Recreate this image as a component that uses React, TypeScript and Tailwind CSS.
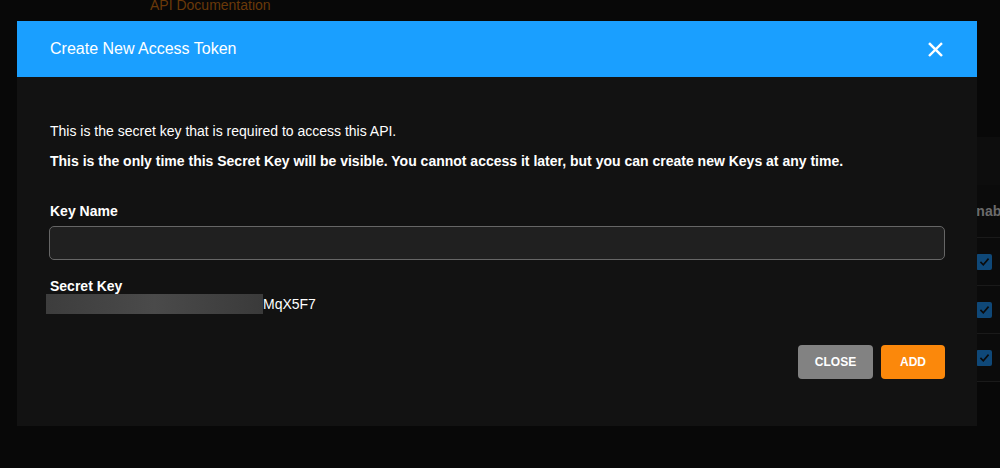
const ROWS = [0, 1, 2];

function CloseIcon() {
  return (
    <svg viewBox="0 0 16 16" className="size-[15px]" fill="none" stroke="white" strokeWidth={2.6} strokeLinecap="square">
      <path d="M2 2L14 14M14 2L2 14" />
    </svg>
  );
}

function BackgroundPage() {
  return (
    <div className="relative h-[468px] w-[1000px] overflow-hidden bg-[#080808]">
      <div className="-mt-[3px] pl-[150px] text-[14px] leading-[16px] text-[#6a3908]">API Documentation</div>
      <div className="ml-[600px] mt-[124px] w-[420px] bg-[#0b0b0b]">
        <div className="h-[48px] bg-[#0d0d0d]" />
        <div className="flex h-[53px] items-center border-b border-[#1a1a1a] pl-[367px] text-[14px] font-bold text-[#6b6b6b]">
          Enabled
        </div>
        {ROWS.map((r) => (
          <div key={r} className="flex h-[48px] items-center border-b border-[#1a1a1a] pl-[376px]">
            <div className="flex size-[16px] items-center justify-center rounded-[2px] bg-[#0f4878]">
              <svg viewBox="0 0 16 16" className="size-[13px]" fill="none" stroke="#0b0b0b" strokeWidth={2}>
                <path d="M3 8.5L6.5 12L13 4.5" />
              </svg>
            </div>
          </div>
        ))}
      </div>
    </div>
  );
}

export default function App() {
  return (
    <div className="relative h-[468px] w-[1000px] font-['Liberation_Sans',Arial,sans-serif]">
      <BackgroundPage />
      <div className="absolute inset-0">
        <div className="ml-[17px] mt-[21px] w-[960px] bg-[#121212]">
          <div className="flex h-[56px] items-center justify-between bg-[#1a9fff] pl-[33px] pr-[32px]">
            <h2 className="text-[16px] text-white">Create New Access Token</h2>
            <button className="flex size-[20px] items-center justify-center">
              <CloseIcon />
            </button>
          </div>
          <div className="px-8 pb-[47px] pt-[46px] text-white">
            <p className="pl-px text-[14px] leading-[16px]">This is the secret key that is required to access this API.</p>
            <p className="mt-[14px] pl-px text-[14px] font-bold leading-[16px]">
              This is the only time this Secret Key will be visible. You cannot access it later, but you can create new Keys at any time.
            </p>
            <label className="mt-[34px] block pl-px text-[14px] font-bold leading-[16px]">Key Name</label>
            <input
              type="text"
              className="mt-[7px] block h-[34px] w-full rounded-[5px] border border-[#666] bg-[#202020] px-3 text-[14px] text-white outline-none"
            />
            <div className="mt-[18px] pl-px text-[14px] font-bold leading-[16px]">Secret Key</div>
            <div className="-ml-[3px] flex items-center">
              <div className="h-[20px] w-[217px] bg-gradient-to-r from-[#3d3d3d] via-[#4a4a4a] to-[#3a3a3a]" />
              <span className="text-[14px] leading-[20px]">MqX5F7</span>
            </div>
            <div className="mt-[31px] flex justify-end gap-2">
              <button className="h-[34px] w-[75px] rounded-[4px] bg-[#828282] text-[12px] font-bold text-white">CLOSE</button>
              <button className="h-[34px] w-[64px] rounded-[4px] bg-[#fb880b] text-[12px] font-bold text-white">ADD</button>
            </div>
          </div>
        </div>
      </div>
    </div>
  );
}
